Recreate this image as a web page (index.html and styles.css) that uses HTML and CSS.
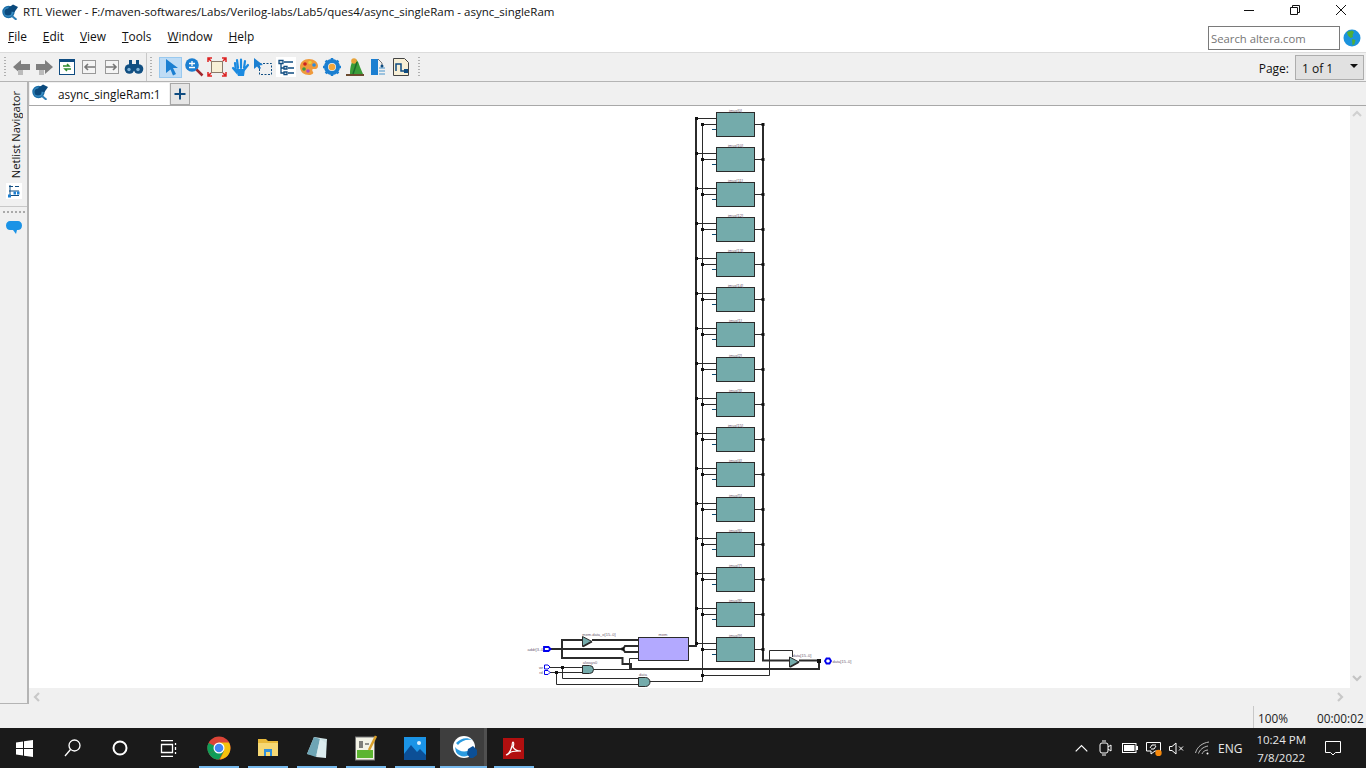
FILE: index.html
```html
<!DOCTYPE html>
<html lang="en">
<head>
<meta charset="utf-8">
<title>RTL Viewer</title>
<link rel="stylesheet" href="styles.css">
</head>
<body>
<svg class="defs" width="0" height="0">
  <defs>
    <symbol id="rtl" viewBox="0 0 16 16">
      <circle cx="6.500" cy="8" r="5.500" fill="#3a8fc4" stroke="#1b6ea8" stroke-width="1.400"/>
      <circle cx="6" cy="8" r="3.600" fill="#0b4a7d"/>
      <path d="M6 4 11 .5 16 3 12.500 8 8 7.500Z" fill="#0b4a7d"/>
      <path d="m10 12 4.500 3.800" stroke="#2f7fb5" stroke-width="2"/>
    </symbol>
    <g id="row">
      <path class="wire" d="M696 6.500H716M702 12.500H716M755 12.500H763"/>
      <path class="stub" d="M712 17.500H716"/>
      <rect class="block" x="716.500" y=".5" width="38" height="24"/>
      <rect class="node" x="695" y="5" width="3" height="3"/>
      <rect class="node" x="701" y="11" width="3" height="3"/>
      <rect class="node" x="761.500" y="11" width="3" height="3"/>
    </g>
  </defs>
</svg>

<header class="titlebar">
  <svg class="title-icon" width="16" height="16"><use href="#rtl"/></svg>
  <span class="title-text">RTL Viewer - F:/maven-softwares/Labs/Verilog-labs/Lab5/ques4/async_singleRam - async_singleRam</span>
  <div class="winctl">
    <svg width="12" height="12" viewBox="0 0 12 12"><path d="M1 6.500H11" stroke="#111"/></svg>
    <svg width="12" height="12" viewBox="0 0 12 12" fill="none" stroke="#111"><path d="M1.500 3.500h7v7h-7zM3.500 3.500v-2h7v7h-2"/></svg>
    <svg width="12" height="12" viewBox="0 0 12 12"><path d="M1 1 11 11M11 1 1 11" stroke="#111"/></svg>
  </div>
</header>

<div class="menubar">
  <nav class="menus">
    <span><u>F</u>ile</span><span><u>E</u>dit</span><span><u>V</u>iew</span><span><u>T</u>ools</span><span><u>W</u>indow</span><span><u>H</u>elp</span>
  </nav>
  <div class="search">
    <div class="search-box">Search altera.com</div>
    <svg width="18" height="18" viewBox="0 0 18 18"><circle cx="9" cy="9" r="8.500" fill="#1b93dd"/><path d="M4 3 9 1.500 11 3 9.500 6 10 8 7.500 9 5 6.500ZM9 10 12.500 11 11.500 15 9.500 16.500Z" fill="#4fae3a"/></svg>
  </div>
</div>

<div class="toolbar">
  <i class="handle"></i>
  <div class="tools tools-a">
    <svg class="t" viewBox="0 0 20 20"><path d="M1 10 9 3v4h9v6H9v4Z" fill="#7f7f7f"/><rect x="6" y="13" width="5" height="5" fill="#bbb"/></svg>
    <svg class="t" viewBox="0 0 20 20"><path d="M19 10 11 3v4H2v6h9v4Z" fill="#7f7f7f"/><rect x="5" y="13" width="5" height="5" fill="#bbb"/></svg>
    <svg class="t" viewBox="0 0 20 20"><rect x="2.500" y="2.500" width="15" height="15" fill="#fff" stroke="#0f4c81"/><rect x="2" y="2" width="16" height="3" fill="#0f4c81"/><path d="M6 9h6l-2-2M14 12H8l2 2" fill="none" stroke="#2e8b2e" stroke-width="1.500"/></svg>
    <svg class="t" viewBox="0 0 20 20"><rect x="3.500" y="3.500" width="13" height="13" fill="#f4f4f4" stroke="#999"/><path d="M16 10H6m3-3-3 3 3 3" fill="none" stroke="#777" stroke-width="1.600"/></svg>
    <svg class="t" viewBox="0 0 20 20"><rect x="3.500" y="3.500" width="13" height="13" fill="#f4f4f4" stroke="#999"/><path d="M4 10h10m-3-3 3 3-3 3" fill="none" stroke="#777" stroke-width="1.600"/></svg>
    <svg class="t" viewBox="0 0 20 20" fill="#114f82"><rect x="5" y="3" width="3" height="5"/><rect x="12" y="3" width="3" height="5"/><circle cx="5.500" cy="12" r="4.800"/><circle cx="14.500" cy="12" r="4.800"/><rect x="8" y="7" width="4" height="4"/><circle cx="5" cy="12.500" r="1.700" fill="#7fb3d8"/><circle cx="14" cy="12.500" r="1.700" fill="#7fb3d8"/></svg>
  </div>
  <i class="sep"></i>
  <i class="handle"></i>
  <div class="tools tools-b">
    <span class="t-on"><svg class="t" viewBox="0 0 20 20"><path d="M5 2 17 11h-5l3 6-3 1.500-2.500-6L5 16Z" fill="#1b7fd1"/></svg></span>
    <svg class="t" viewBox="0 0 20 20"><circle cx="8" cy="8" r="6.800" fill="#1b7fd1"/><path d="M5 6.500h6M8 4v5M5 10.500h6" stroke="#fff" stroke-width="1.300"/><path d="M12.500 12.500 18.500 18.500" stroke="#a0262c" stroke-width="2.500"/></svg>
    <svg class="t" viewBox="0 0 20 20"><rect x="4.500" y="4.500" width="11" height="11" fill="#f7efd6" stroke="#8a7a6a"/><path d="M1 5V1h4M19 5V1h-4M1 15v4h4M19 15v4h-4M1 1l3 3M19 1l-3 3M1 19l3-3M19 19l-3-3" stroke="#d22" stroke-width="1.500" fill="none"/></svg>
    <svg class="t" viewBox="0 0 20 20"><path d="M3 11l3 3.500L5 6M8 11 7 3M11 11V2.500M14 11l1-7M14 13l4-5" fill="none" stroke="#1b8ae0" stroke-width="2.200" stroke-linecap="round"/><path d="M6 12h9l-1 7H8Z" fill="#1b8ae0"/></svg>
    <svg class="t" viewBox="0 0 20 20"><rect x="6.500" y="6.500" width="12" height="11" fill="none" stroke="#0f4c81" stroke-dasharray="2 1.500"/><path d="M1 1v11l3-2.500 2.500 3L8 11 6 8.500l4-.5Z" fill="#1b7fd1"/></svg>
    <svg class="t t-white" viewBox="0 0 20 20"><path d="M3 3.500h4v3H3zM8 5h9M8 9.500h3v2.500H8zM12 11h6M8 15h3v2.500H8zM12 16h6M5 6.500V16h3M5 11h3" fill="none" stroke="#0f4c81" stroke-width="1.300"/></svg>
    <svg class="t" viewBox="0 0 20 20"><path d="M10 2c5 0 9 3 9 7s-4 3-5 3-1 2 0 3-1 3-4 3c-5 0-9-3-9-8s4-8 9-8Z" fill="#ef9a3c"/><circle cx="6" cy="7" r="1.800" fill="#c22"/><circle cx="11" cy="5.500" r="1.800" fill="#e8d23b"/><circle cx="15" cy="8" r="1.800" fill="#2a8de0"/><circle cx="5" cy="12" r="1.800" fill="#3b9d3b"/><circle cx="9" cy="14" r="1.800" fill="#b04ac0"/></svg>
    <svg class="t" viewBox="0 0 20 20"><circle cx="10" cy="10" r="6" fill="none" stroke="#1b7fd1" stroke-width="4"/><circle cx="10" cy="10" r="3.300" fill="#f2a73c"/><path d="M10 1v3M10 16v3M1 10h3M16 10h3M3.600 3.600l2 2M14.400 14.400l2 2M16.400 3.600l-2 2M5.600 14.400l-2 2" stroke="#1b7fd1" stroke-width="2.500"/></svg>
    <svg class="t" viewBox="0 0 20 20"><path d="M5 17C5 9 7 3 10 2c3 1 4 5 5 8l3 7Z" fill="#3a9d3a"/><circle cx="9" cy="4" r="2.800" fill="#e8a33a"/><path d="M1 18h18" stroke="#6b4a2e" stroke-width="2"/><path d="M12 5 8 17" stroke="#1d6b2d" stroke-width="1.500"/></svg>
    <svg class="t" viewBox="0 0 20 20"><path d="M3 2h7v16H3Z" fill="#1b7fd1"/><path d="M10 2l4 4v3" fill="none" stroke="#777"/><path d="M11 11h6M11 14h6M11 17h6" stroke="#7fb3d8" stroke-width="1.400"/><circle cx="14" cy="9" r="1.500" fill="#0f4c81"/></svg>
    <svg class="t" viewBox="0 0 20 20"><path d="M2.500 1.500h11l4 4v13h-15Z" fill="#f7efd6" stroke="#444"/><path d="M5 14V7h5v7h6" fill="none" stroke="#0f4c81" stroke-width="1.500"/><rect x="13" y="12" width="4" height="4" fill="#0f4c81"/></svg>
  </div>
  <i class="handle"></i>
  <div class="pager">
    <span class="pager-label">Page:</span>
    <div class="combo"><span>1 of 1</span><i class="caret"></i></div>
  </div>
</div>

<div class="work">
  <aside class="rail">
    <div class="rail-top">
      <span class="rail-label">Netlist Navigator</span>
      <svg class="rail-icon" width="16" height="16" viewBox="0 0 16 16"><rect width="16" height="16" fill="#fff"/><path d="M4 2v11M3 3.500h4M3 8h10M3 12.500h10M9 3.500h4" stroke="#0f4c81"/><rect x="2" y="11.500" width="3" height="3" fill="#1b7fd1"/><rect x="7.500" y="8.500" width="2.500" height="3" fill="#1b7fd1"/><rect x="11" y="8.500" width="2.500" height="3" fill="#1b7fd1"/></svg>
    </div>
    <div class="rail-bottom">
      <i class="rail-dots"></i>
      <svg width="16" height="14" viewBox="0 0 16 14"><path d="M4 0h8c2 0 4 1.500 4 4.500S14 9 12 9h-1l-1 4-3-4H4C2 9 0 7.500 0 4.500S2 0 4 0Z" fill="#1b93e6"/></svg>
    </div>
  </aside>
  <div class="workspace">
    <div class="tabrow">
      <div class="tab"><svg width="16" height="16"><use href="#rtl"/></svg><span>async_singleRam:1</span></div>
      <div class="tab-add"><svg width="12" height="12" viewBox="0 0 12 12"><path d="M6 .5v11M.5 6h11" stroke="#0f4c81" stroke-width="2"/></svg></div>
    </div>
    <div class="canvas-wrap">
      <svg class="canvas" width="1321" height="582" viewBox="29 106 1321 582">
        <path class="bus" d="M696 118V646H688M763 124V660.500H790M799 660.500H819V669H631V664H622.500V658H562V640H582M592 640H638M547 649H623M623 649l2-3H638M623 649l2 3H638"/>
        <path class="wire" d="M702.500 124V681.500H649M550 667.500H582M550 672.500H582M593 669.500H630M638 658.500H629.500V669M562.500 667V678.500H638M556.500 672.500V684.500H638M702 675.500H769.500V650.500H792.500V657"/>
        <use href="#row" y="112"/><use href="#row" y="147"/><use href="#row" y="182"/><use href="#row" y="217"/>
        <use href="#row" y="252"/><use href="#row" y="287"/><use href="#row" y="322"/><use href="#row" y="357"/>
        <use href="#row" y="392"/><use href="#row" y="427"/><use href="#row" y="462"/><use href="#row" y="497"/>
        <use href="#row" y="532"/><use href="#row" y="567"/><use href="#row" y="602"/><use href="#row" y="637"/>
        <g class="lbl">
          <text x="735.500" y="111.500">imux[0]</text><text x="735.500" y="146.500">imux[10]</text>
          <text x="735.500" y="181.500">imux[11]</text><text x="735.500" y="216.500">imux[12]</text>
          <text x="735.500" y="251.500">imux[13]</text><text x="735.500" y="286.500">imux[14]</text>
          <text x="735.500" y="321.500">imux[1]</text><text x="735.500" y="356.500">imux[2]</text>
          <text x="735.500" y="391.500">imux[3]</text><text x="735.500" y="426.500">imux[15]</text>
          <text x="735.500" y="461.500">imux[4]</text><text x="735.500" y="496.500">imux[5]</text>
          <text x="735.500" y="531.500">imux[6]</text><text x="735.500" y="566.500">imux[7]</text>
          <text x="735.500" y="601.500">imux[8]</text><text x="735.500" y="636.500">imux[9]</text>
          <text x="663" y="636">mem</text>
          <text x="599" y="636">mem.data_o[15..0]</text>
          <text x="590" y="664">always0</text>
          <text x="643" y="676">data</text>
          <text x="802" y="657">data[15..0]</text>
          <text x="842" y="663">data[15..0]</text>
          <text x="536" y="651">addr[3..0]</text>
          <text x="541" y="669">wr</text>
          <text x="541" y="674">rd</text>
        </g>
        <rect class="mem" x="638.500" y="637.500" width="50" height="23"/>
        <path class="gate" d="M582.500 636.500 592 641.500 582.500 646.500Z"/>
        <path class="gate" d="M789.500 657 799 662 789.500 667Z"/>
        <path class="gate-edge" d="M583 646.500 592 641.500M790 667 799 662"/>
        <path class="gate" d="M582.500 665.500h7a4 4 0 0 1 0 8h-7Z"/>
        <path class="gate" d="M638.500 677.500h7a4.500 4.500 0 0 1 0 9h-7Z"/>
        <path class="port" d="M544 647h4.500l2 2-2 2H544Z"/>
        <path class="port" d="M825 661l1.500-2.500h3l1.500 2.500-1.500 2.500h-3Z"/>
        <path class="port-thin" d="M544.500 665h3.500l2 2-2 2h-3.500Z"/>
        <path class="port-thin" d="M544.500 670.500h3.500l2 2-2 2h-3.500Z"/>
        <rect class="node" x="621.500" y="647.500" width="3" height="3"/>
        <rect class="node" x="561" y="666" width="3" height="3"/>
        <rect class="node" x="555" y="671" width="3" height="3"/>
        <rect class="node" x="701" y="674" width="3" height="3"/>
        <rect class="node" x="817" y="659" width="4" height="4"/>
      </svg>
      <div class="vscroll">
        <svg width="10" height="7" viewBox="0 0 10 7"><path d="M1 6 5 2l4 4" fill="none" stroke="#d0d0d0" stroke-width="2.200"/></svg>
        <svg width="10" height="7" viewBox="0 0 10 7"><path d="M1 1l4 4 4-4" fill="none" stroke="#c4c4c4" stroke-width="2.200"/></svg>
      </div>
    </div>
    <div class="hscroll">
      <svg width="7" height="10" viewBox="0 0 7 10"><path d="M6 1 2 5l4 4" fill="none" stroke="#c8c8c8" stroke-width="2.200"/></svg>
      <svg width="7" height="10" viewBox="0 0 7 10"><path d="M1 1l4 4-4 4" fill="none" stroke="#c8c8c8" stroke-width="2.200"/></svg>
    </div>
  </div>
</div>
<div class="statusbar">
  <span class="zoomval">100%</span>
  <span class="elapsed">00:00:02</span>
</div>

<footer class="taskbar">
  <div class="task-left">
    <span class="tb"><svg width="17" height="17" viewBox="0 0 17 17" fill="#fff"><path d="M0 2.500 7 1.500V8H0ZM8 1.300 17 0v8H8ZM0 9h7v6.500L0 14.500ZM8 9h9v8l-9-1.300Z"/></svg></span>
    <span class="tb"><svg width="17" height="18" viewBox="0 0 17 18" fill="none" stroke="#fff" stroke-width="1.300"><circle cx="10.500" cy="6.500" r="5.500"/><path d="M6.500 10.500 1 17"/></svg></span>
    <span class="tb"><svg width="16" height="16" viewBox="0 0 16 16"><circle cx="8" cy="8" r="6.500" fill="none" stroke="#fff" stroke-width="2"/></svg></span>
    <span class="tb tb-last"><svg width="17" height="17" viewBox="0 0 17 17" fill="none" stroke="#fff" stroke-width="1.300"><path d="M1 .7h12M1 16.300h12M1.500 4.500h11v8h-11zM15.500 3v2M15.500 7v3M15.500 12v2"/></svg></span>
    <span class="tb app on"><svg width="24" height="24" viewBox="0 0 24 24"><circle cx="12" cy="12" r="11.500" fill="#db4437"/><path d="M12 12 2 18a11.500 11.500 0 0 1-.5-11Z" fill="#0f9d58"/><path d="M12 23.500A11.500 11.500 0 0 1 2 18l5-3h10Z" fill="#0f9d58"/><path d="M12 6.500h10a11.500 11.500 0 0 1-9 17L17 15Z" fill="#f4c20d"/><circle cx="12" cy="12" r="5.500" fill="#fff"/><circle cx="12" cy="12" r="4.300" fill="#4285f4"/></svg></span>
    <span class="tb app on"><svg width="22" height="20" viewBox="0 0 22 20"><path d="M1 1h8l2 2h10v14H1Z" fill="#e8b93a"/><path d="M1 5h20v13H1Z" fill="#f6d874"/><path d="M7 11h8v7h-2v-4H9v4H7Z" fill="#2f8fdc"/></svg></span>
    <span class="tb app on"><svg width="22" height="24" viewBox="0 0 22 24"><path d="M8 1 21 3 20 21 1 18Z" fill="#cfe3e6"/><path d="M8 1 1 18l9 3 4-18Z" fill="#6ea5b5"/><path d="M10 21 20 22V7L14 3Z" fill="#dcecef"/></svg></span>
    <span class="tb app on"><svg width="22" height="26" viewBox="0 0 22 26"><rect x=".5" y="2" width="19" height="23" fill="#f3f3e6" stroke="#777"/><rect x="2" y="15" width="16" height="8" fill="#5cb531"/><path d="M5 6v7M7 6v7M10 9h4" stroke="#333" stroke-width="1.200"/><path d="M21 1 14 15" stroke="#d9a02c" stroke-width="2.500"/></svg></span>
    <span class="tb app on"><svg width="22" height="23" viewBox="0 0 22 23"><rect width="22" height="23" fill="#1b94e6"/><path d="M0 17 7 8l6 7 3-3 6 6v5H0Z" fill="#0c4f96"/><circle cx="15" cy="6" r="2" fill="#d8efff"/></svg></span>
    <span class="tb app on active"><svg width="26" height="26" viewBox="0 0 26 26"><circle cx="12" cy="12" r="11" fill="#fff"/><path d="M3 12c4 5 11 6 17 2l-1 5c-5 4-12 3-15-2Z" fill="#2b9be0"/><path d="M4 8c5-5 11-6 16-3-6-1-11 1-14 5Z" fill="#2b9be0"/><path d="M16 14l5-3 4 4v5l-4 3h-3l-3-4Z" fill="#0b4f96"/></svg></span>
    <span class="tb app on"><svg width="21" height="21" viewBox="0 0 21 21"><rect width="21" height="21" fill="#b10f0f"/><path d="M3 17c3-1 5-5 6-9 .5-2 0-4 1-4s1 3 0 5c1 2 4 4 8 4-3 0-7 0-10 1-2 1-3 3-5 3Z" fill="none" stroke="#fff" stroke-width="1.200"/></svg></span>
  </div>
  <div class="tray">
    <svg class="tr-chev" width="13" height="8" viewBox="0 0 13 8"><path d="M.7 7.300 6.500 1.500l5.800 5.800" fill="none" stroke="#fff" stroke-width="1.200"/></svg>
    <svg class="tr-cam" width="13" height="16" viewBox="0 0 13 16" fill="none" stroke="#fff"><path d="M1 5a2 2 0 0 1 2-2h4a2 2 0 0 1 2 2v6a2 2 0 0 1-2 2H3a2 2 0 0 1-2-2ZM9 7l3-2v6L9 9M3 1h4M3 15h4"/></svg>
    <svg class="tr-bat" width="16" height="10" viewBox="0 0 16 10"><rect x=".5" y=".5" width="13.500" height="9" fill="none" stroke="#fff"/><rect x="2" y="2" width="10.500" height="6" fill="#fff"/><rect x="14" y="3" width="2" height="4" fill="#fff"/></svg>
    <svg class="tr-sync" width="16" height="15" viewBox="0 0 16 15"><path d="M.5 1.500h14v8.500h-5.500l-4 3v-3H.5Z" fill="none" stroke="#fff"/><path d="M4 7 6 4h4M10 5l-2 3H5" fill="none" stroke="#fff"/><circle cx="12.500" cy="12" r="3.200" fill="#f7890c"/></svg>
    <svg class="tr-vol" width="15" height="13" viewBox="0 0 15 13" fill="none" stroke="#fff"><path d="M.5 4.500h2.500L7 1v11L3 8.500H.5ZM10 4.500l4 4M14 4.500l-4 4"/></svg>
    <svg class="tr-wifi" width="15" height="14" viewBox="0 0 15 14" fill="none" stroke="#bbb"><path d="M.5 12C2 6 7 2 14 1M3.500 12.500C4.500 9 8 6 13 5M7 13c.5-2 3-4 6-4"/><circle cx="12.500" cy="12.500" r="1" fill="#fff" stroke="none"/></svg>
    <span class="tr-lang">ENG</span>
    <div class="clock"><span>10:24 PM</span><span>7/8/2022</span></div>
    <svg class="tr-note" width="16" height="16" viewBox="0 0 16 16"><path d="M.5 1.500h15v11h-5l-2.500 2.500-2.500-2.500h-5Z" fill="none" stroke="#fff"/></svg>
  </div>
</footer>
</body>
</html>
```
FILE: styles.css
```css
* { box-sizing: border-box; }
html, body { margin: 0; padding: 0; }
body {
  width: 1366px;
  height: 768px;
  overflow: hidden;
  background: #f0f0f0;
  font-family: "Open Sans", "Noto Sans", sans-serif;
  font-size: 12px;
  color: #111;
  display: flex;
  flex-direction: column;
}
.defs { position: absolute; }
i { display: block; font-style: normal; }

.titlebar {
  height: 25px;
  background: #fff;
  display: flex;
  align-items: center;
  padding-left: 2px;
  flex: none;
}
.title-icon { margin-right: 5px; margin-top: -2px; }
.title-text { font-size: 11.500px; margin-top: -2px; }
.winctl {
  margin-left: auto;
  display: flex;
  gap: 34px;
  padding-right: 19px;
  margin-top: -5px;
}

.menubar {
  height: 28px;
  background: #fff;
  display: flex;
  align-items: flex-start;
  flex: none;
  border-bottom: 1px solid #dcdcdc;
}
.menus {
  display: flex;
  padding-left: 8px;
  gap: 16px;
  font-size: 11.900px;
  padding-top: 3px;
}
.search {
  margin-left: auto;
  display: flex;
  align-items: center;
  gap: 3px;
  padding-right: 5px;
  margin-top: 1px;
}
.search-box {
  width: 132px;
  height: 24px;
  border: 1px solid #7a7a7a;
  background: #fff;
  color: #757575;
  font-size: 11.300px;
  line-height: 23px;
  padding-left: 2px;
}

.toolbar {
  height: 29px;
  flex: none;
  display: flex;
  align-items: center;
  border-bottom: 1px solid #b4b4b4;
  padding-left: 4px;
}
.handle {
  width: 2px;
  height: 20px;
  background-image: linear-gradient(#b0b0b0 50%, transparent 50%);
  background-size: 2px 3px;
  flex: none;
}
.tools { display: flex; align-items: center; flex: none; }
.tools-a { width: 138px; padding-left: 6px; justify-content: space-between; }
.tools-b { padding-left: 7px; gap: 3px; margin-right: 7px; }
.t { width: 20px; height: 20px; display: block; flex: none; }
.t-white { background: #fff; }
.t-on {
  width: 23px;
  height: 21px;
  margin-right: -1.500px;
  background: #bfdcf5;
  border: 1px solid #99c9ef;
  display: flex;
  align-items: center;
  justify-content: center;
}
.sep { width: 1px; height: 28px; background: #c8c8c8; margin: 0 3px 0 2px; }
.pager { margin-left: auto; display: flex; align-items: center; gap: 6px; padding-right: 2px; }
.pager-label { font-size: 12px; padding-top: 3px; }
.combo {
  width: 69px;
  height: 25px;
  background: #e1e1e1;
  border: 1px solid #adadad;
  display: flex;
  align-items: center;
  padding: 2px 0 0 6px;
  font-size: 12px;
}
.caret {
  width: 0;
  height: 0;
  margin-left: auto;
  margin-right: 5px;
  margin-top: -5px;
  border: 4px solid transparent;
  border-top: 4px solid #111;
  border-bottom: 0;
}

.work { height: 624px; flex: none; display: flex; align-items: flex-start; }
.rail {
  width: 29px;
  height: 622px;
  flex: none;
  border-right: 2px solid #b4b4b4;
  border-bottom: 1px solid #b4b4b4;
  display: flex;
  flex-direction: column;
  align-items: center;
}
.rail-top {
  height: 125px;
  width: 27px;
  border-bottom: 1px solid #c8c8c8;
  display: flex;
  flex-direction: column;
  align-items: center;
  padding-top: 9px;
  gap: 5px;
}
.rail-label {
  writing-mode: vertical-rl;
  transform: rotate(180deg);
  font-size: 11.200px;
  line-height: 15px;
  white-space: nowrap;
  margin-left: 3px;
}
.rail-bottom { display: flex; flex-direction: column; align-items: center; gap: 8px; padding-top: 4px; }
.rail-dots {
  width: 22px;
  height: 2px;
  background-image: linear-gradient(90deg, #aaa 50%, transparent 50%);
  background-size: 4px 2px;
}
.workspace { flex: 1; display: flex; flex-direction: column; }
.tabrow {
  height: 24px;
  flex: none;
  display: flex;
  align-items: flex-start;
  padding: 1px 0 0 1px;
  border-bottom: 1px solid #a8a8a8;
}
.tab {
  width: 139px;
  height: 22px;
  background: #fff;
  display: flex;
  align-items: center;
  padding-left: 2px;
  font-size: 11.800px;
  gap: 10px;
}
.tab svg { margin-top: -4px; }
.tab-add {
  width: 20px;
  height: 22px;
  margin-left: 1px;
  background: #e6e6e6;
  border: 1px solid #a8a8a8;
  display: flex;
  align-items: center;
  justify-content: center;
}
.canvas-wrap { height: 582px; flex: none; display: flex; }
.canvas { display: block; background: #fff; flex: none; }
.vscroll {
  width: 16px;
  flex: none;
  display: flex;
  flex-direction: column;
  justify-content: space-between;
  align-items: center;
  padding: 4px 2px 6px 0;
}
.hscroll {
  height: 18px;
  flex: none;
  display: flex;
  justify-content: space-between;
  align-items: center;
  padding: 0 22px 0 4px;
}
.statusbar {
  height: 22px;
  flex: none;
  display: flex;
  align-items: center;
  font-size: 11.800px;
  padding-left: 1253px;
  color: #1c1c1c;
}
.zoomval { border-left: 1px solid #c8c8c8; height: 22px; line-height: 24px; padding-left: 4px; width: 64px; }
.elapsed { line-height: 24px; height: 22px; }

.wire, .bus, .stub { fill: none; }
.wire { stroke: #2b2b2b; stroke-width: 1; }
.bus { stroke: #2b2b2b; stroke-width: 2; }
.stub { stroke: #0b4a70; stroke-width: 1; }
.block { fill: #74abab; stroke: #2b2b2b; stroke-width: 1; }
.mem { fill: #b3a9ff; stroke: #2b2b2b; stroke-width: 1; }
.gate { fill: #74abab; stroke: #2b2b2b; stroke-width: 1; }
.gate-edge { fill: none; stroke: #2b2b2b; stroke-width: 1.800; }
.node { fill: #111; }
.port { fill: #fff; stroke: #0000ee; stroke-width: 1.800; }
.port-thin { fill: #fff; stroke: #0000ee; stroke-width: 1; }
.lbl text { font-family: "Liberation Sans", sans-serif; font-size: 4px; fill: #6b5a70; text-anchor: middle; }

.taskbar {
  height: 40px;
  flex: none;
  background: #1a1a1a;
  display: flex;
  justify-content: space-between;
  color: #fff;
}
.task-left { display: flex; }
.tb {
  width: 48px;
  height: 40px;
  display: flex;
  align-items: center;
  justify-content: center;
  position: relative;
}
.tb-last { margin-right: 2px; }
.tb.app { width: 49.200px; }
.tb.on::after {
  content: "";
  position: absolute;
  bottom: 0;
  left: 4.500px;
  right: 4.700px;
  height: 2px;
  background: #76b9ed;
}
.tb.active {
  background: linear-gradient(90deg, #3e3e3e 44px, #505050 44px, #505050 47px, transparent 47px);
}
.tb.active::after { left: 0; right: 2px; }
.tray { display: flex; align-items: center; padding-right: 25px; }
.tr-chev { margin-right: 11px; }
.tr-cam { margin-right: 9.500px; }
.tr-bat { margin-right: 8px; }
.tr-sync { margin-right: 7.500px; }
.tr-vol { margin-right: 11px; }
.tr-wifi { margin-right: 7.500px; }
.tr-lang { font-size: 12px; margin-right: 14px; color: #e8e8e8; }
.clock {
  display: flex;
  flex-direction: column;
  align-items: center;
  font-size: 11.500px;
  line-height: 18px;
  margin-right: 19px;
  padding-top: 2px;
  color: #e8e8e8;
}
```
